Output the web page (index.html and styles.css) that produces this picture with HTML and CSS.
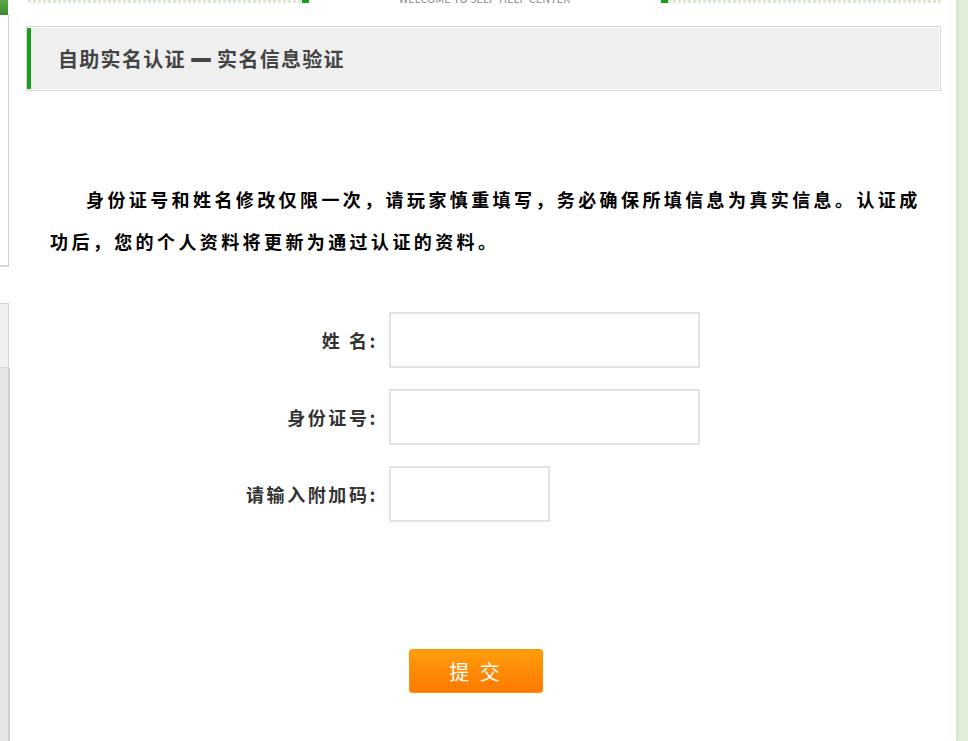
FILE: index.html
```html
<!DOCTYPE html>
<html lang="zh-CN">
<head>
  <meta charset="UTF-8" />
  <title>自助实名认证 - 实名信息验证</title>
  <link rel="stylesheet" href="styles.css">
</head>
<body>
  <div class="page">
    <!-- 左侧菜单残边 -->
    <div class="side">
      <div class="side-logo"></div>
      <div class="side-nav"></div>
      <div class="side-gap"></div>
      <div class="side-box"></div>
      <div class="side-rest"></div>
    </div>

    <div class="main">
      <div class="top-strip">
        <span class="dots"></span>
        <span class="mark"></span>
        <span class="welcome">WELCOME TO SELF-HELP CENTER</span>
        <span class="mark"></span>
        <span class="dots"></span>
      </div>

      <div class="title-box">
        <h2 class="title">自助实名认证 <b class="dash">—</b> 实名信息验证</h2>
      </div>

      <div class="content">
        <p class="notice">身份证号和姓名修改仅限一次，请玩家慎重填写，务必确保所填信息为真实信息。认证成功后，您的个人资料将更新为通过认证的资料。</p>

        <form class="form" onsubmit="return false;">
          <div class="row">
            <label class="label">姓 名:</label>
            <input class="input" type="text" />
          </div>
          <div class="row">
            <label class="label">身份证号:</label>
            <input class="input" type="text" />
          </div>
          <div class="row">
            <label class="label">请输入附加码:</label>
            <input class="input short" type="text" />
          </div>
          <div class="actions">
            <button class="submit" type="submit">提 交</button>
          </div>
        </form>
      </div>
    </div>

    <div class="edge"></div>
  </div>
</body>
</html>
```

FILE: styles.css
```css
* { box-sizing: border-box; }
html, body { height: 100%; }
body {
  margin: 0;
  font-family: "Noto Sans CJK SC", "Liberation Sans", sans-serif;
  background: #e0edd8;
  overflow: hidden;
}
.page {
  display: flex;
  height: 100vh;
}

/* left */
.side {
  width: 10px;
  display: flex;
  flex-direction: column;
  background: #fff;
}
.side-logo {
  width: 8px; height: 15px;
  background: linear-gradient(#5aa848, #3f8a33);
}
.side-nav {
  height: 252px;
  border-right: 1px solid #d0d0d0;
  border-bottom: 2px solid #d6d6d6;
  margin-right: 1px;
}
.side-gap { height: 36px; }
.side-box {
  height: 65px;
  background: #f0f0f0;
  border-top: 1px solid #d6d6d6;
  border-right: 1px solid #d6d6d6;
  border-bottom: 1px solid #d6d6d6;
  margin-right: 1px;
}
.side-rest {
  flex: 1;
  background: #e6e6e6;
  border-right: 2px solid #cfcfcf;
}

/* main */
.main {
  width: 946px;
  background: #fff;
  padding: 0 15px 0 16px;
}
.top-strip {
  display: flex;
  align-items: flex-end;
  height: 4px;
  margin-left: 2px;
  overflow: hidden;
}
.dots {
  flex: 1;
  height: 3px;
  align-self: flex-start;
  background: repeating-linear-gradient(90deg, #dbe8d4 0 3px, transparent 3px 5px);
}
.mark {
  width: 7px; height: 3px;
  align-self: flex-start;
  background: #14a014;
}
.welcome {
  width: 352px;
  text-align: center;
  font-size: 11px;
  line-height: 11px;
  color: #888;
  white-space: nowrap;
}

.title-box {
  margin-top: 22px;
  border: 1px solid #d6d6d6;
  padding: 1px;
  padding-left: 0;
}
.title {
  margin: 0;
  height: 61px;
  background: #efefef;
  border-left: 4px solid #1d9d1d;
  padding-left: 27px;
  font-size: 20px;
  font-weight: 600;
  letter-spacing: 1.3px;
  line-height: 61px;
  color: #444;
}
.dash {
  font-weight: 900;
  display: inline-block;
  transform: translateY(-4px) scale(1.2, 1.8);
}

.content {
  padding: 0 10px 0 24px;
}
.notice {
  margin: 87px 0 0;
  text-indent: 36px;
  font-size: 18px;
  font-weight: bold;
  letter-spacing: 3.4px;
  line-height: 42px;
  color: #000;
}

.form {
  margin-top: 50px;
}
.row {
  display: flex;
  align-items: center;
  gap: 11px;
  margin-bottom: 21px;
}
.label {
  width: 328px;
  text-align: right;
  font-size: 18px;
  font-weight: bold;
  letter-spacing: 2.6px;
  color: #333;
}
.input {
  width: 311px;
  height: 56px;
  border: 2px solid #e3e3e3;
  outline: none;
  background: #fff;
}
.input.short { width: 161px; }

.actions {
  padding: 106px 0 0 359px;
}
.submit {
  width: 134px;
  height: 44px;
  border: 1px solid #ff9000;
  border-radius: 3px;
  background: linear-gradient(#ff9d0c, #ff7900);
  color: #fff;
  font-family: inherit;
  font-size: 20px;
  letter-spacing: 3px;
  cursor: pointer;
}

/* right */
.edge {
  flex: 1;
  background: linear-gradient(90deg, #d6e6cd, #e3efdc 4px, #e0edd8);
}
```
